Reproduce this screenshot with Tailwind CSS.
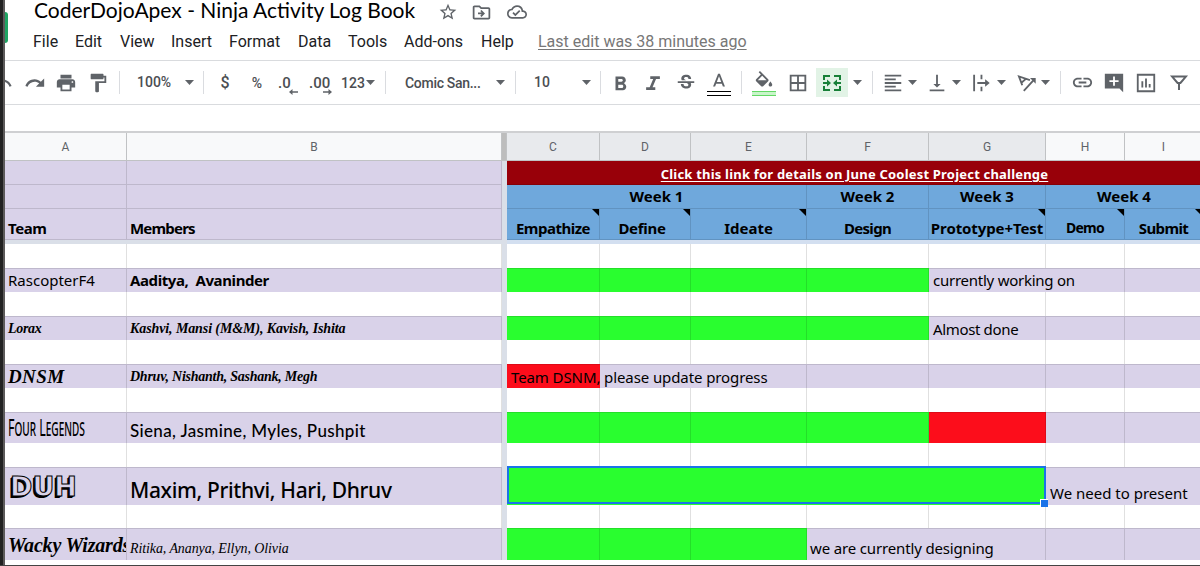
<!DOCTYPE html>
<html lang="en">

<head>
    <meta charset="UTF-8">
    <meta name="viewport" content="width=device-width, initial-scale=1.0">
    <title>CoderDojoApex - Ninja Activity Log Book</title>
    <script src="https://cdn.jsdelivr.net/npm/@tailwindcss/browser@4"></script>
</head>

<body class="w-[1200px] h-[566px] overflow-hidden bg-white flex flex-col font-[Roboto,sans-serif]">
    <div class="flex h-[565px] overflow-hidden">
        <!-- Window edge -->
        <div class="w-[5px] shrink-0 bg-[#222] border-r-2 border-[#5c5a5a]"></div>

        <div class="w-[1195px] shrink-0 flex flex-col overflow-hidden">
            <!-- Title and menus -->
            <header class="h-[60px] shrink-0 flex">
                <div class="w-[3px] h-[31px] mt-3 rounded-r-sm bg-[#1fa463] shrink-0"></div>
                <div class="flex flex-col">
                    <div class="h-[26px] flex items-center pl-[26px]">
                        <h1 class="w-[404px] text-[21px] leading-6 -mt-1.5 text-black whitespace-nowrap font-[Lato,sans-serif]">CoderDojoApex - Ninja Activity Log Book</h1>
                        <svg class="w-5 h-5 -mt-0.5" viewBox="0 0 24 24" fill="#5f6368"><path d="M22 9.24l-7.19-.62L12 2 9.19 8.63 2 9.24l5.46 4.73L5.82 21 12 17.27 18.18 21l-1.63-7.03L22 9.24zM12 15.4l-3.76 2.27 1-4.28-3.32-2.88 4.38-.38L12 6.1l1.71 4.04 4.38.38-3.32 2.88 1 4.28L12 15.4z"/></svg>
                        <svg class="w-[21px] h-[21px] ml-[13px] -mt-0.5" viewBox="0 0 24 24" fill="#5f6368"><path d="M20 6h-8l-2-2H4c-1.1 0-2 .9-2 2v12c0 1.100.9 2 2 2h16c1.100 0 2-.9 2-2V8c0-1.100-.9-2-2-2zm0 12H4V6h5.170l2 2H20v10zm-8.010-1l4-4-4-4-1.410 1.410L12.160 12H8v2h4.160l-1.590 1.590L11.990 17z"/></svg>
                        <svg class="w-5 h-5 ml-[15px] -mt-0.5" viewBox="0 0 24 24" fill="#5f6368"><path d="M19.350 10.040A7.490 7.490 0 0 0 12 4C9.110 4 6.600 5.640 5.350 8.040A5.994 5.994 0 0 0 0 14c0 3.310 2.690 6 6 6h13c2.760 0 5-2.240 5-5 0-2.640-2.050-4.780-4.650-4.960zM19 18H6c-2.210 0-4-1.790-4-4s1.790-4 4-4h.710C7.370 7.690 9.480 6 12 6c3.040 0 5.500 2.460 5.500 5.500v.5H19c1.660 0 3 1.340 3 3s-1.340 3-3 3zm-9-3.820l-2.090-2.090L6.500 13.500 10 17l6.010-6.010-1.410-1.410z"/></svg>
                    </div>
                    <nav class="flex h-8 items-center pl-[25px] text-base text-[#202124] whitespace-nowrap">
                        <a class="w-[42px]">File</a>
                        <a class="w-[45px]">Edit</a>
                        <a class="w-[51px]">View</a>
                        <a class="w-[58px]">Insert</a>
                        <a class="w-[69px]">Format</a>
                        <a class="w-[50px]">Data</a>
                        <a class="w-[56px]">Tools</a>
                        <a class="w-[77px]">Add-ons</a>
                        <a class="w-[57px]">Help</a>
                        <a class="text-[#777] underline underline-offset-2">Last edit was 38 minutes ago</a>
                    </nav>
                </div>
            </header>

            <!-- Toolbar -->
            <div class="h-[45px] shrink-0 border-t border-b border-t-[#d9dbde] border-b-[#d9dbde] flex items-center text-sm font-medium text-[#4b4e52] whitespace-nowrap [&>*]:shrink-0">
                <div class="w-2 overflow-hidden"><svg class="w-[22px] h-[22px] -ml-[14px]" viewBox="0 0 24 24" fill="#5f6368"><path d="M12.500 8c-2.650 0-5.050.99-6.900 2.600L2 7v9h9l-3.620-3.620c1.390-1.160 3.160-1.880 5.120-1.880 3.540 0 6.550 2.310 7.600 5.500l2.370-.78C21.080 11.030 17.150 8 12.500 8z"/></svg></div>
                <svg class="w-[22px] h-[22px] ml-[11px]" viewBox="0 0 24 24" fill="#5f6368"><path d="M18.400 10.600C16.550 8.990 14.150 8 11.500 8c-4.650 0-8.580 3.030-9.960 7.220L3.900 16c1.050-3.190 4.050-5.500 7.600-5.500 1.950 0 3.730.72 5.120 1.880L13 16h9V7l-3.600 3.600z"/></svg>
                <svg class="w-[22px] h-[22px] ml-[9px]" viewBox="0 0 24 24" fill="#5f6368"><path d="M19 8H5c-1.660 0-3 1.340-3 3v6h4v4h12v-4h4v-6c0-1.660-1.340-3-3-3zm-3 11H8v-5h8v5zm3-7c-.55 0-1-.45-1-1s.45-1 1-1 1 .45 1 1-.45 1-1 1zm-1-9H6v4h12V3z"/></svg>
                <svg class="w-[22px] h-[22px] ml-[10px]" viewBox="0 0 24 24" fill="#5f6368"><path d="M18 4V3c0-.55-.45-1-1-1H5c-.55 0-1 .45-1 1v4c0 .55.45 1 1 1h12c.55 0 1-.45 1-1V6h1v4H9v11c0 .55.45 1 1 1h2c.55 0 1-.45 1-1v-9h8V4h-3z"/></svg>
                <div class="w-px h-[23px] ml-[10px] bg-[#dadce0]"></div>
                <div class="w-12 ml-[17px] -mt-0.5">100%</div>
                <svg class="w-[9px] h-[5px]" viewBox="0 0 9 5" fill="#5f6368"><path d="M0 0h9L4.500 5z"/></svg>
                <div class="w-px h-[23px] ml-[9px] mr-px bg-[#dadce0]"></div>
                <div class="w-5 ml-[10px] text-center text-base">$</div>
                <div class="w-5 ml-3 text-center">%</div>
                <div class="w-5 ml-[11px] relative text-[15px] leading-6">.0
                    <svg class="absolute right-0 top-[18px] w-[9px] h-[6px]" viewBox="0 0 9 6" fill="#5f6368"><path d="M3.500 0v2.300H9v1.400H3.500V6L0 3z"/></svg>
                </div>
                <div class="w-[23px] ml-[11px] relative text-[15px] leading-6">.00
                    <svg class="absolute right-0 top-[18px] w-[9px] h-[6px]" viewBox="0 0 9 6" fill="#5f6368"><path d="M5.500 0v2.300H0v1.400h5.500V6L9 3z"/></svg>
                </div>
                <div class="w-6 ml-[9px]">123</div>
                <svg class="w-[9px] h-[5px] ml-px" viewBox="0 0 9 5" fill="#5f6368"><path d="M0 0h9L4.500 5z"/></svg>
                <div class="w-px h-[23px] ml-[10px] mr-px bg-[#dadce0]"></div>
                <div class="w-[91px] ml-[18px] tracking-[-0.3px]">Comic San...</div>
                <svg class="w-[9px] h-[5px]" viewBox="0 0 9 5" fill="#5f6368"><path d="M0 0h9L4.500 5z"/></svg>
                <div class="w-px h-[23px] ml-[10px] bg-[#dadce0]"></div>
                <div class="w-12 ml-[18px] -mt-0.5">10</div>
                <svg class="w-[9px] h-[5px]" viewBox="0 0 9 5" fill="#5f6368"><path d="M0 0h9L4.500 5z"/></svg>
                <div class="w-px h-[23px] ml-[9px] bg-[#dadce0]"></div>
                <svg class="w-[22px] h-[22px] ml-[9px]" viewBox="0 0 24 24" fill="#5f6368"><path d="M15.600 11.790c.97-.67 1.650-1.770 1.650-2.790 0-2.260-1.750-4-4-4H6v15h8.040c2.090 0 3.710-1.700 3.710-3.790 0-1.520-.86-2.820-2.150-3.420zM9 7.500h3.500c.83 0 1.500.67 1.500 1.500s-.67 1.500-1.500 1.500H9v-3zm4 10H9V14h4c.83 0 1.500.67 1.500 1.500s-.67 2-1.500 2z"/></svg>
                <svg class="w-[22px] h-[22px] ml-[10px]" viewBox="0 0 24 24" fill="#5f6368"><path d="M9 4.500v3h3.200l-3.800 9H4.500v3h10v-3h-3l3.800-9H19.500v-3z"/></svg>
                <svg class="w-[22px] h-[22px] ml-[11px]" viewBox="0 0 24 24" fill="#5f6368"><path d="M7.240 8.750c-.26-.48-.39-1.030-.39-1.670 0-.61.13-1.160.4-1.670.26-.5.63-.93 1.110-1.290.48-.35 1.050-.63 1.700-.83.66-.19 1.390-.29 2.180-.29.81 0 1.540.11 2.210.34.66.22 1.230.54 1.690.94.47.4.83.88 1.080 1.430s.38 1.150.38 1.810h-3.010c0-.31-.05-.59-.15-.85-.09-.27-.24-.49-.44-.68-.2-.19-.45-.33-.75-.44-.3-.1-.66-.16-1.060-.16-.39 0-.74.04-1.030.13s-.53.21-.72.36c-.19.16-.34.34-.44.55-.1.21-.15.43-.15.66 0 .48.25.88.74 1.210.38.25.77.48 1.410.7H7.390c-.05-.08-.11-.17-.15-.25zM21 12v-2H3v2h9.620c.18.07.4.14.55.2.37.17.66.34.87.51s.35.36.43.57c.07.2.11.43.11.69 0 .23-.05.45-.14.66-.09.2-.23.38-.42.53-.19.15-.42.26-.71.35-.29.08-.63.13-1.010.13-.43 0-.83-.04-1.180-.13s-.66-.23-.91-.42c-.25-.19-.45-.44-.59-.75s-.25-.76-.25-1.210H6.400c0 .55.08 1.130.24 1.580s.37.85.65 1.210c.28.35.6.66.98.92.37.26.78.48 1.220.65.44.17.9.3 1.380.39.48.08.96.13 1.440.13.8 0 1.530-.09 2.180-.28s1.210-.45 1.670-.79c.46-.34.82-.77 1.070-1.270s.38-1.070.38-1.710c0-.6-.1-1.140-.31-1.610-.05-.11-.11-.23-.17-.33H21z"/></svg>
                <div class="w-6 h-[29px] ml-[10px] flex flex-col items-center">
                    <svg class="w-[22px] h-[22px] mt-[3px] shrink-0" viewBox="0 0 24 24" fill="#5f6368"><path d="M11 3L5.500 17h2.250l1.120-3h6.250l1.120 3h2.250L13 3h-2zm-1.380 9L12 5.670 14.380 12H9.620z"/></svg>
                    <div class="w-6 h-[5px] -mt-[2px] shrink-0 border-t border-b border-t-black border-b-black"></div>
                </div>
                <div class="w-px h-[23px] ml-[10px] bg-[#dadce0]"></div>
                <div class="w-6 h-[29px] ml-[10px] flex flex-col items-center">
                    <svg class="w-[22px] h-[22px] mt-[3px] shrink-0" viewBox="0 0 24 24" fill="#5f6368"><path d="M16.560 8.940L7.620 0 6.210 1.410l2.380 2.380-5.150 5.150c-.59.59-.59 1.540 0 2.120l5.500 5.500c.29.29.68.44 1.060.44s.77-.15 1.060-.44l5.500-5.500c.59-.58.59-1.530 0-2.120zM5.210 10L10 5.210 14.790 10H5.210zM19 11.500s-2 2.170-2 3.500c0 1.100.9 2 2 2s2-.9 2-2c0-1.330-2-3.500-2-3.500z"/></svg>
                    <div class="w-6 h-[5px] -mt-[2px] shrink-0 border-t border-b border-[#63d965] bg-[#c9f5ca]"></div>
                </div>
                <svg class="w-[22px] h-[22px] ml-[11px]" viewBox="0 0 24 24" fill="#5f6368"><path d="M3 3v18h18V3H3zm8 16H5v-6h6v6zm0-8H5V5h6v6zm8 8h-6v-6h6v6zm0-8h-6V5h6v6z"/></svg>
                <div class="w-8 h-[29px] ml-[7px] bg-[#e2f3e6] flex items-center justify-center">
                    <svg class="w-5 h-[18px]" viewBox="0 0 20 18" fill="none" stroke="#188038" stroke-width="2"><path d="M2 6V2h6M12 2h6v4M2 12v4h6M12 16h6v-4M1 9h5M19 9h-5"/><path fill="#188038" stroke="none" d="M5 5.500L9 9l-4 3.500zM15 5.500L11 9l4 3.500z"/></svg>
                </div>
                <svg class="w-[9px] h-[5px] ml-[5px]" viewBox="0 0 9 5" fill="#5f6368"><path d="M0 0h9L4.500 5z"/></svg>
                <div class="w-px h-[23px] ml-[10px] bg-[#dadce0]"></div>
                <svg class="w-[22px] h-[22px] ml-[9px]" viewBox="0 0 24 24" fill="#5f6368"><path d="M15 15H3v2h12v-2zm0-8H3v2h12V7zM3 13h18v-2H3v2zm0 8h18v-2H3v2zM3 3v2h18V3H3z"/></svg>
                <svg class="w-[9px] h-[5px] ml-1" viewBox="0 0 9 5" fill="#5f6368"><path d="M0 0h9L4.500 5z"/></svg>
                <svg class="w-[22px] h-[22px] ml-[9px]" viewBox="0 0 24 24" fill="#5f6368"><path d="M16 13h-3V3h-2v10H8l4 4 4-4zM4 19v2h16v-2H4z"/></svg>
                <svg class="w-[9px] h-[5px] ml-1" viewBox="0 0 9 5" fill="#5f6368"><path d="M0 0h9L4.500 5z"/></svg>
                <svg class="w-[22px] h-[22px] ml-[9px]" viewBox="0 0 24 24" fill="none" stroke="#5f6368" stroke-width="2"><path d="M4.500 3v18M12.500 3v5M12.500 16v5M8 12h10"/><path fill="#5f6368" stroke="none" d="M16.500 8l5 4-5 4z"/></svg>
                <svg class="w-[9px] h-[5px] ml-[5px]" viewBox="0 0 9 5" fill="#5f6368"><path d="M0 0h9L4.500 5z"/></svg>
                <svg class="w-[22px] h-[22px] ml-[10px]" viewBox="0 0 24 24" fill="none" stroke="#5f6368" stroke-width="2"><path d="M6.800 14.500L3.200 4.800l12 4M6.200 11.500l4.600-4M8.500 20.500L19.500 8.500"/><path fill="#5f6368" stroke="none" d="M15.300 6.500h6.200v6.200z"/></svg>
                <svg class="w-[9px] h-[5px] ml-[3px]" viewBox="0 0 9 5" fill="#5f6368"><path d="M0 0h9L4.500 5z"/></svg>
                <div class="w-px h-[23px] ml-[10px] bg-[#dadce0]"></div>
                <svg class="w-[23px] h-[23px] ml-[10px]" viewBox="0 0 24 24" fill="#5f6368"><path d="M3.900 12c0-1.710 1.390-3.100 3.100-3.100h4V7H7c-2.760 0-5 2.240-5 5s2.240 5 5 5h4v-1.900H7c-1.710 0-3.100-1.390-3.100-3.100zM8 13h8v-2H8v2zm9-6h-4v1.900h4c1.710 0 3.100 1.390 3.100 3.100s-1.390 3.100-3.100 3.100h-4V17h4c2.760 0 5-2.240 5-5s-2.240-5-5-5z"/></svg>
                <svg class="w-[22px] h-[22px] ml-[9px]" viewBox="0 0 24 24" fill="#5f6368"><path d="M21.990 2H2v16h16l4 4-.01-20zM17 11h-4v4h-2v-4H7V9h4V5h2v4h4v2z"/></svg>
                <svg class="w-[22px] h-[22px] ml-[10px]" viewBox="0 0 24 24" fill="#5f6368"><path d="M2 2v20h20V2H2zm18 18H4V4h16v16zM7 10h2v7H7zm4-3h2v10h-2zm4 6h2v4h-2z"/></svg>
                <svg class="w-[22px] h-[22px] ml-[11px]" viewBox="0 0 24 24" fill="none" stroke="#5f6368" stroke-width="2.200"><path d="M4.500 5h15l-5.900 7H10.400zM12 11v8.500"/></svg>
            </div>

            <!-- Formula bar -->
            <div class="h-7 shrink-0 border-b-2 border-[#cfd0d2]"></div>

            <!-- Sheet -->
            <table class="w-[1198px] shrink-0 table-fixed border-separate border-spacing-0 whitespace-nowrap text-[15px] leading-[20px] text-black font-['Noto_Sans',sans-serif] [&_td]:p-0 [&_td]:border-r [&_td]:border-black/12 [&_td]:align-bottom">
                <colgroup>
                    <col class="w-[122px]">
                    <col class="w-[375px]">
                    <col class="w-[5px]">
                    <col class="w-[93px]">
                    <col class="w-[91px]">
                    <col class="w-[116px]">
                    <col class="w-[122px]">
                    <col class="w-[117px]">
                    <col class="w-[79px]">
                    <col class="w-[78px]">
                </colgroup>
                <thead>
                    <tr class="h-7 text-xs text-[#5f6368] font-[Roboto,sans-serif] [&>th]:p-0 [&>th]:font-normal [&>th]:border-r [&>th]:border-b [&>th]:border-[#c0c2c4]">
                        <th class="bg-[#f8f9fa]">A</th>
                        <th class="bg-[#f8f9fa]">B</th>
                        <th class="bg-[#bdbdbd]"></th>
                        <th class="bg-[#e8eaed]">C</th>
                        <th class="bg-[#e8eaed]">D</th>
                        <th class="bg-[#e8eaed]">E</th>
                        <th class="bg-[#e8eaed]">F</th>
                        <th class="bg-[#e8eaed]">G</th>
                        <th class="bg-[#f8f9fa]">H</th>
                        <th class="bg-[#f8f9fa]">I</th>
                    </tr>
                </thead>
                <tbody>
                    <!-- Frozen header rows -->
                    <tr class="h-6 [&>td]:border-b">
                        <td class="bg-[#d9d2e9]"></td>
                        <td class="bg-[#d9d2e9]"></td>
                        <td rowspan="16" class="bg-[#dadfe8] border-0!"></td>
                        <td colspan="7" class="bg-[#980009] text-center text-white text-[13px] leading-[20px] tracking-[0.2px] font-bold"><a class="underline underline-offset-2">Click this link for details on June Coolest Project challenge</a></td>
                    </tr>
                    <tr class="h-6 font-bold text-center bg-[#6fa8dc] [&>td]:border-b [&>td]:pb-[2px]">
                        <td class="bg-[#d9d2e9]"></td>
                        <td class="bg-[#d9d2e9]"></td>
                        <td colspan="3">Week 1</td>
                        <td>Week 2</td>
                        <td>Week 3</td>
                        <td colspan="2">Week 4</td>
                    </tr>
                    <tr class="h-[31px] font-bold text-center bg-[#6fa8dc] [&>td]:border-b [&>td]:pb-px [&>td]:relative">
                        <td class="bg-[#d9d2e9] text-left"><span class="ml-[3px] tracking-[-0.4px]">Team</span></td>
                        <td class="bg-[#d9d2e9] text-left"><span class="ml-[3px] tracking-[-0.8px]">Members</span></td>
                        <td class="tracking-[-0.5px]">Empathize<svg class="absolute top-0 right-0 w-[7px] h-[7px]" viewBox="0 0 7 7"><path d="M0 0h7v7z"/></svg></td>
                        <td class="tracking-[-0.3px]"><span class="mr-[6px]">Define</span><svg class="absolute top-0 right-0 w-[7px] h-[7px]" viewBox="0 0 7 7"><path d="M0 0h7v7z"/></svg></td>
                        <td>Ideate<svg class="absolute top-0 right-0 w-[7px] h-[7px]" viewBox="0 0 7 7"><path d="M0 0h7v7z"/></svg></td>
                        <td class="tracking-[-0.7px]">Design</td>
                        <td class="tracking-[-0.1px]">Prototype+Test<svg class="absolute top-0 right-0 w-[7px] h-[7px]" viewBox="0 0 7 7"><path d="M0 0h7v7z"/></svg></td>
                        <td class="text-[14px] tracking-[-0.7px]">Demo<svg class="absolute top-0 right-0 w-[7px] h-[7px]" viewBox="0 0 7 7"><path d="M0 0h7v7z"/></svg></td>
                        <td class="tracking-[-0.6px]">Submit<svg class="absolute top-0 right-0 w-[7px] h-[7px]" viewBox="0 0 7 7"><path d="M0 0h7v7z"/></svg></td>
                    </tr>
                    <tr class="h-1 leading-none">
                        <td colspan="2" class="bg-[#dadfe8] border-0!"></td>
                        <td colspan="7" class="bg-[#d3dff0] border-0!"></td>
                    </tr>

                    <!-- Teams -->
                    <tr class="h-6"><td></td><td></td><td></td><td></td><td></td><td></td><td></td><td></td><td></td></tr>
                    <tr class="h-6 bg-[#d9d2e9] [&>td]:border-t [&>td]:pb-[2px]">
                        <td><span class="ml-[3px]">RascopterF4</span></td>
                        <td class="font-bold"><span class="ml-[3px] whitespace-pre tracking-[-0.4px]">Aaditya,  Avaninder</span></td>
                        <td class="bg-[#29fe2f]"></td>
                        <td class="bg-[#29fe2f]"></td>
                        <td class="bg-[#29fe2f]"></td>
                        <td class="bg-[#29fe2f]"></td>
                        <td class="border-r-0!"><span class="ml-[4px] tracking-[-0.25px]">currently working on</span></td>
                        <td></td>
                        <td></td>
                    </tr>
                    <tr class="h-6"><td></td><td></td><td></td><td></td><td></td><td></td><td></td><td></td><td></td></tr>
                    <tr class="h-6 bg-[#d9d2e9] [&>td]:border-t [&>td]:pb-px">
                        <td class="font-['Liberation_Serif',serif] font-bold italic text-[14px]"><span class="ml-[3px] tracking-[-0.3px]">Lorax</span></td>
                        <td class="font-['Liberation_Serif',serif] font-bold italic text-[14px]"><span class="ml-[3px] tracking-[-0.1px]">Kashvi, Mansi (M&amp;M), Kavish, Ishita</span></td>
                        <td class="bg-[#29fe2f]"></td>
                        <td class="bg-[#29fe2f]"></td>
                        <td class="bg-[#29fe2f]"></td>
                        <td class="bg-[#29fe2f]"></td>
                        <td><span class="ml-[4px] tracking-[-0.35px]">Almost done</span></td>
                        <td></td>
                        <td></td>
                    </tr>
                    <tr class="h-6"><td></td><td></td><td></td><td></td><td></td><td></td><td></td><td></td><td></td></tr>
                    <tr class="h-6 bg-[#d9d2e9] [&>td]:border-t [&>td]:pb-px">
                        <td class="font-['Liberation_Serif',serif] font-bold italic text-[19px]"><span class="ml-[3px] tracking-[0.4px]">DNSM</span></td>
                        <td class="font-['Liberation_Serif',serif] font-bold italic text-[14px]"><span class="ml-[3px] tracking-[-0.25px]">Dhruv, Nishanth, Sashank, Megh</span></td>
                        <td class="bg-[#fc0d1b] border-r-0!"><span class="ml-[4px] tracking-[-0.1px]">Team DSNM, please update progress</span></td>
                        <td class="border-r-0!"></td>
                        <td></td>
                        <td></td>
                        <td></td>
                        <td></td>
                        <td></td>
                    </tr>
                    <tr class="h-6"><td></td><td></td><td></td><td></td><td></td><td></td><td></td><td></td><td></td></tr>
                    <tr class="h-[31px] bg-[#d9d2e9] [&>td]:border-t [&>td]:pb-[2px]">
                        <td class="text-[22px] leading-[24px] pb-[5px]! [font-variant:small-caps]"><span class="inline-block ml-[3px] origin-left scale-x-[.565] scale-y-110">Four Legends</span></td>
                        <td class="text-[17px] font-[Lato,sans-serif] font-medium"><span class="ml-[3px] tracking-[0.35px]">Siena, Jasmine, Myles, Pushpit</span></td>
                        <td class="bg-[#29fe2f]"></td>
                        <td class="bg-[#29fe2f]"></td>
                        <td class="bg-[#29fe2f]"></td>
                        <td class="bg-[#29fe2f]"></td>
                        <td class="bg-[#fc0d1b]"></td>
                        <td></td>
                        <td></td>
                    </tr>
                    <tr class="h-6"><td></td><td></td><td></td><td></td><td></td><td></td><td></td><td></td><td></td></tr>
                    <tr class="h-[38px] bg-[#d9d2e9] [&>td]:border-t [&>td]:pb-[2px]">
                        <td class="text-[27px] leading-[32px] font-['DejaVu_Sans',sans-serif] font-bold text-[#d9d2e9] [-webkit-text-stroke:1px_#000] [text-shadow:-1px_1px_0_#000,-2px_2px_0_#000]"><span class="ml-[5px]">DUH</span></td>
                        <td class="text-[21px] leading-[26px] font-medium"><span class="ml-[3px] tracking-[-0.35px]">Maxim, Prithvi, Hari, Dhruv</span></td>
                        <td colspan="5" class="relative bg-[#29fe2f]">
                            <!-- Selected range -->
                            <div class="absolute left-0 -right-px -top-[2px] h-[38px] border-2 border-[#1a73e8]"></div>
                            <div class="absolute -right-[3px] -bottom-[2px] w-2 h-2 bg-[#1a73e8] border-t border-l border-white"></div>
                        </td>
                        <td class="border-r-0!"><span class="ml-[4px]">We need to present</span></td>
                        <td></td>
                    </tr>
                    <tr class="h-[23px]"><td></td><td></td><td></td><td></td><td></td><td></td><td></td><td></td><td></td></tr>
                    <tr class="h-8 bg-[#d9d2e9] [&>td]:border-t [&>td]:pb-[2px]">
                        <td class="font-['Liberation_Serif',serif] font-bold italic text-[20px] leading-[26px]"><div class="overflow-hidden"><span class="ml-[3px] tracking-[-0.2px]">Wacky Wizards</span></div></td>
                        <td class="font-['Liberation_Serif',serif] italic text-[14px] pb-px!"><span class="ml-[3px] tracking-[-0.1px]">Ritika, Ananya, Ellyn, Olivia</span></td>
                        <td class="bg-[#29fe2f]"></td>
                        <td class="bg-[#29fe2f]"></td>
                        <td class="bg-[#29fe2f]"></td>
                        <td class="border-r-0!"><span class="ml-[3px] tracking-[-0.15px]">we are currently designing</span></td>
                        <td></td>
                        <td></td>
                        <td></td>
                    </tr>
                </tbody>
            </table>
        </div>
    </div>
    <!-- Window bottom edge -->
    <div class="h-px bg-[#444]"></div>
</body>

</html>
